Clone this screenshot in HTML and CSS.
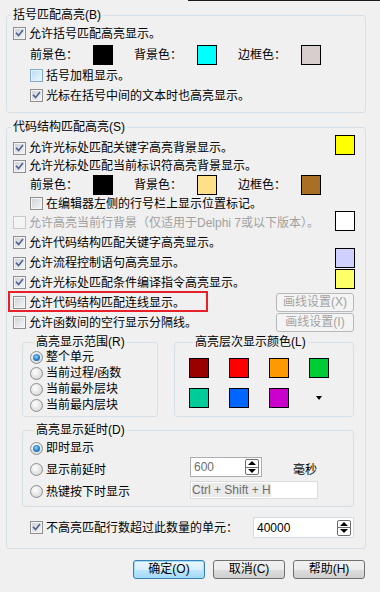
FILE: index.html
```html
<!DOCTYPE html>
<html lang="zh-CN">
<head>
  <meta charset="utf-8">
  <title>代码结构匹配高亮</title>
  <link rel="stylesheet" href="styles.css">
</head>
<body>
  <div class="topline"></div>
  <div class="dialog">

    <fieldset class="grp grp-bracket">
      <legend>括号匹配高亮(B)</legend>
      <div class="row h19 ind0">
        <span class="cb"><svg viewBox="0 0 13 13"><path d="M3 6.4 L5.4 9 L10 3"/></svg></span>
        <span class="lbl">允许括号匹配高亮显示。</span>
      </div>
      <div class="row h23 ind1">
        <div class="pair"><span class="clabel">前景色：</span><span class="sw c-black"></span></div>
        <div class="pair"><span class="clabel">背景色：</span><span class="sw c-cyan"></span></div>
        <div class="pair"><span class="clabel">边框色：</span><span class="sw c-rose"></span></div>
      </div>
      <div class="row h19 ind1">
        <span class="cb hot empty"></span>
        <span class="lbl">括号加粗显示。</span>
      </div>
      <div class="row h21 ind1">
        <span class="cb"><svg viewBox="0 0 13 13"><path d="M3 6.4 L5.4 9 L10 3"/></svg></span>
        <span class="lbl">光标在括号中间的文本时也高亮显示。</span>
      </div>
    </fieldset>

    <fieldset class="grp grp-struct">
      <legend>代码结构匹配高亮(S)</legend>
      <div class="row h18 ind0">
        <span class="cb"><svg viewBox="0 0 13 13"><path d="M3 6.4 L5.4 9 L10 3"/></svg></span>
        <span class="lbl">允许光标处匹配关键字高亮背景显示。</span>
        <span class="sw side up4 c-yellow"></span>
      </div>
      <div class="row h18 ind0">
        <span class="cb"><svg viewBox="0 0 13 13"><path d="M3 6.4 L5.4 9 L10 3"/></svg></span>
        <span class="lbl">允许光标处匹配当前标识符高亮背景显示。</span>
      </div>
      <div class="row h19 ind1">
        <div class="pair"><span class="clabel">前景色：</span><span class="sw c-black"></span></div>
        <div class="pair"><span class="clabel">背景色：</span><span class="sw c-sand"></span></div>
        <div class="pair"><span class="clabel">边框色：</span><span class="sw c-brown"></span></div>
      </div>
      <div class="row h19 ind1">
        <span class="cb empty"></span>
        <span class="lbl">在编辑器左侧的行号栏上显示位置标记。</span>
      </div>
      <div class="row h19 ind0">
        <span class="cb off empty"></span>
        <span class="lbl dim">允许高亮当前行背景（仅适用于Delphi 7或以下版本）。</span>
        <span class="sw side up2 c-white"></span>
      </div>
      <div class="row h21 ind0">
        <span class="cb"><svg viewBox="0 0 13 13"><path d="M3 6.4 L5.4 9 L10 3"/></svg></span>
        <span class="lbl">允许代码结构匹配关键字高亮显示。</span>
      </div>
      <div class="row h20 ind0">
        <span class="cb"><svg viewBox="0 0 13 13"><path d="M3 6.4 L5.4 9 L10 3"/></svg></span>
        <span class="lbl">允许流程控制语句高亮显示。</span>
        <span class="sw side up5 c-lilac"></span>
      </div>
      <div class="row h19 ind0">
        <span class="cb"><svg viewBox="0 0 13 13"><path d="M3 6.4 L5.4 9 L10 3"/></svg></span>
        <span class="lbl">允许光标处匹配条件编译指令高亮显示。</span>
        <span class="sw side up4 c-lemon"></span>
      </div>
      <div class="row h21 ind0 marked">
        <span class="cb empty"></span>
        <span class="lbl">允许代码结构匹配连线显示。</span>
        <span class="btn-off">画线设置(X)</span>
        <span class="mark"></span>
      </div>
      <div class="row h19 ind0">
        <span class="cb empty"></span>
        <span class="lbl">允许函数间的空行显示分隔线。</span>
        <span class="btn-off">画线设置(I)</span>
      </div>

      <div class="subs">
        <fieldset class="sub sub-range">
          <legend>高亮显示范围(R)</legend>
          <div class="rrow"><span class="rb on"></span><span class="lbl">整个单元</span></div>
          <div class="rrow"><span class="rb"></span><span class="lbl">当前过程/函数</span></div>
          <div class="rrow"><span class="rb"></span><span class="lbl">当前最外层块</span></div>
          <div class="rrow"><span class="rb"></span><span class="lbl">当前最内层块</span></div>
        </fieldset>
        <fieldset class="sub sub-levels">
          <legend>高亮层次显示颜色(L)</legend>
          <div class="levels">
            <span class="sw c-maroon"></span>
            <span class="sw c-red"></span>
            <span class="sw c-orange"></span>
            <span class="sw c-green"></span>
            <span class="sw c-teal"></span>
            <span class="sw c-blue"></span>
            <span class="sw c-purple"></span>
            <span class="more"></span>
          </div>
        </fieldset>
      </div>

      <fieldset class="sub sub-delay">
        <legend>高亮显示延时(D)</legend>
        <div class="drow h22">
          <span class="rb on"></span><span class="lbl">即时显示</span>
        </div>
        <div class="drow h21">
          <div class="dlabel"><span class="rb"></span><span class="lbl">显示前延时</span></div>
          <div class="spinbox gray">
            <span class="val">600</span>
            <span class="spin"><span class="up"></span><span class="down"></span></span>
          </div>
          <span class="unit">毫秒</span>
        </div>
        <div class="drow h23">
          <div class="dlabel"><span class="rb"></span><span class="lbl">热键按下时显示</span></div>
          <div class="hotkey"><span class="keys">Ctrl + Shift + H</span></div>
        </div>
      </fieldset>

      <div class="row h21 ind1 limit">
        <span class="cb"><svg viewBox="0 0 13 13"><path d="M3 6.4 L5.4 9 L10 3"/></svg></span>
        <span class="lbl">不高亮匹配行数超过此数量的单元：</span>
        <div class="spinbox num">
          <span class="val">40000</span>
          <span class="spin"><span class="up"></span><span class="down"></span></span>
        </div>
      </div>
    </fieldset>

    <div class="actions">
      <button class="btn default">确定(O)</button>
      <button class="btn">取消(C)</button>
      <button class="btn">帮助(H)</button>
    </div>

  </div>
</body>
</html>
```

FILE: styles.css
```css
* {
  box-sizing: border-box;
}

body {
  background-color: #f0f0f0;
  color: #000;
  font-family: "Liberation Sans", "Noto Sans CJK SC", sans-serif;
  font-size: 12px;
  height: 592px;
  line-height: 14px;
  margin: 0;
  overflow: hidden;
  width: 380px;
}

.topline {
  border-top: 1px solid #1a1a1a;
  height: 1px;
  margin-left: 188px;
}

.dialog {
  padding: 7px 0 0 6px;
}

/* group boxes */
.grp,
.sub {
  border: 1px solid #d5dfe5;
  border-radius: 3px;
  margin: 0;
  min-width: 0;
  padding: 0;
}
.grp > legend,
.sub > legend {
  height: 14px;
  line-height: 14px;
  margin-left: 4px;
  padding: 0 2px;
  white-space: nowrap;
}
.grp {
  width: 360px;
}
.grp-bracket {
  padding: 2px 0 6px;
}
.grp-struct {
  margin-top: 7px;
  padding: 5px 0 10px;
}

/* rows */
.row {
  align-items: center;
  display: flex;
  position: relative;
}
.h18 { height: 18px; }
.h19 { height: 19px; }
.h20 { height: 20px; }
.h21 { height: 21px; }
.h22 { height: 22px; }
.h23 { height: 23px; }
.ind0 { padding-left: 6px; }
.ind1 { padding-left: 23px; }

.lbl {
  margin-left: 3px;
  white-space: nowrap;
}
.dim {
  color: #a0a0a0;
}

/* check boxes */
.cb {
  background: linear-gradient(135deg, #cdd0d4 0%, #f6f6f6 100%);
  border: 1px solid #8e8f8f;
  box-shadow: inset 0 0 0 1px #f4f4f4;
  display: inline-block;
  flex: none;
  height: 13px;
  width: 13px;
}
.cb svg {
  display: block;
  height: 11px;
  width: 11px;
}
.cb svg path {
  fill: none;
  stroke: #4b5f92;
  stroke-linecap: square;
  stroke-width: 1.9;
}
.cb.hot {
  background: linear-gradient(135deg, #b6dbf3 0%, #eef8fe 100%);
  border-color: #85a9c8;
  box-shadow: inset 0 0 0 1px #def1fc;
}
.cb.off {
  background: #f4f4f4;
  border-color: #c8c8c8;
  box-shadow: none;
}

/* radio buttons */
.rb {
  background: radial-gradient(circle at 40% 35%, #ffffff 0%, #e2e2e2 60%, #c9c9c9 100%);
  border: 1px solid #8e8f8f;
  border-radius: 50%;
  display: inline-block;
  flex: none;
  height: 13px;
  position: relative;
  width: 13px;
}
.rb.on::after {
  background: radial-gradient(circle at 45% 40%, #9adcf9 0%, #2d8ad0 45%, #16538e 100%);
  border-radius: 50%;
  content: "";
  height: 7px;
  left: 2px;
  position: absolute;
  top: 2px;
  width: 7px;
}

/* colour swatches */
.sw {
  border: 1px solid #000;
  display: inline-block;
  flex: none;
  height: 20px;
  width: 20px;
}
.sw.side {
  align-self: flex-start;
  margin-left: auto;
  margin-right: 10px;
}
.up2 { margin-top: -2px; }
.up4 { margin-top: -4px; }
.up5 { margin-top: -5px; }

.c-black { background: #000; }
.c-cyan { background: #00ffff; }
.c-rose { background: #d8cecd; }
.c-yellow { background: #ffff00; }
.c-sand { background: #ffdf88; }
.c-brown { background: #a86f25; }
.c-white { background: #fff; }
.c-lilac { background: #d0d0ff; }
.c-lemon { background: #ffff66; }
.c-maroon { background: #990000; }
.c-red { background: #ff0000; }
.c-orange { background: #ff9900; }
.c-green { background: #00cc33; }
.c-teal { background: #00cc99; }
.c-blue { background: #0066ff; }
.c-purple { background: #cc00cc; }

.pair {
  align-items: center;
  display: flex;
  width: 104px;
}
.clabel {
  width: 63px;
}

/* small disabled buttons */
.btn-off {
  background-color: #f4f4f4;
  border: 1px solid #b5b9bc;
  border-radius: 3px;
  color: #a3a3a3;
  height: 19px;
  line-height: 17px;
  margin-left: auto;
  margin-right: 11px;
  text-align: center;
  width: 78px;
}

.mark {
  border: 2px solid #e8202a;
  height: 21px;
  left: 1px;
  position: absolute;
  top: -1px;
  width: 200px;
}

/* sub groups */
.subs {
  display: flex;
  gap: 16px;
  margin: 3px 0 0 15px;
}
.sub-range {
  padding: 0 0 3px 7px;
  width: 136px;
}
.sub-levels {
  padding: 9px 0 7px 14px;
  width: 180px;
}
.rrow {
  align-items: center;
  display: flex;
  height: 16px;
}
.levels {
  column-gap: 20px;
  display: grid;
  grid-template-columns: repeat(4, 20px);
  row-gap: 10px;
}
.more {
  align-self: center;
  border-left: 3px solid transparent;
  border-right: 3px solid transparent;
  border-top: 4px solid #000;
  height: 0;
  justify-self: center;
  width: 0;
}

.sub-delay {
  margin: 6px 0 0 15px;
  padding: 0 0 3px 7px;
  width: 332px;
}
.drow {
  align-items: center;
  display: flex;
}
.dlabel {
  align-items: center;
  display: flex;
  width: 160px;
}

.spinbox {
  align-items: center;
  background-color: #fff;
  border: 1px solid #abadb3;
  display: flex;
  padding-left: 3px;
}
.spinbox .val {
  flex: 1;
}
.spinbox.gray {
  align-self: flex-start;
  color: #6d6d6d;
  height: 20px;
  margin-top: -2px;
  width: 72px;
}
.spin {
  border: 1px solid #6d6d6d;
  border-radius: 2px;
  display: flex;
  flex-direction: column;
  height: 16px;
  margin-right: 2px;
  width: 14px;
}
.spin .up,
.spin .down {
  align-items: center;
  display: flex;
  flex: 1;
  justify-content: center;
}
.spin .up {
  border-bottom: 1px solid #6d6d6d;
}
.spin .up::after {
  border-bottom: 4px solid #000;
  border-left: 4px solid transparent;
  border-right: 4px solid transparent;
  content: "";
}
.spin .down::after {
  border-left: 4px solid transparent;
  border-right: 4px solid transparent;
  border-top: 4px solid #000;
  content: "";
}
.unit {
  margin-left: 31px;
}

.hotkey {
  align-self: flex-start;
  background-color: #fff;
  border: 1px solid #dcdcdc;
  color: #6d6d6d;
  height: 18px;
  line-height: 16px;
  margin-top: 1px;
  padding-left: 1px;
  width: 128px;
}
.keys {
  background-color: #ebebeb;
}

.limit {
  margin-top: 10px;
}
.spinbox.num {
  border-color: #d5dbe1;
  height: 21px;
  margin-left: auto;
  margin-right: 11px;
  width: 101px;
}

/* dialog buttons */
.actions {
  display: flex;
  gap: 8px;
  justify-content: flex-end;
  margin-top: 11px;
  width: 359px;
}
.btn {
  background: linear-gradient(#f2f2f2 0%, #ebebeb 50%, #dddddd 51%, #cfcfcf 100%);
  border: 1px solid #707070;
  border-radius: 3px;
  color: #000;
  font-family: inherit;
  font-size: 12px;
  height: 19px;
  line-height: 15px;
  padding: 0;
  width: 72px;
}
.btn.default {
  background: linear-gradient(#eaf6fd 0%, #d9f0fc 50%, #bee6fd 51%, #a7d9f5 100%);
  border-color: #3c7fb1;
  box-shadow: inset 0 0 0 1px #9ee0fb;
}
```
